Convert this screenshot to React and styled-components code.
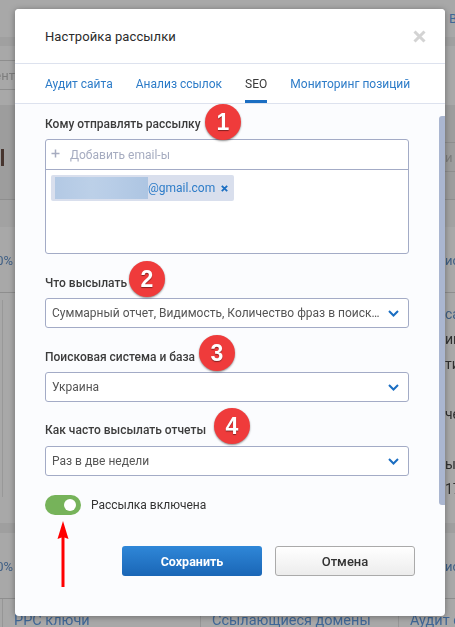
import React from 'react';
import styled, { createGlobalStyle } from 'styled-components';

const Global = createGlobalStyle`
  html, body { margin: 0; padding: 0; background: #a8a8a8; }
  body { font-family: Roboto, "Noto Sans", sans-serif; overflow: hidden; }
  * { box-sizing: border-box; }
`;

const Page = styled.div`
  position: relative;
  width: 455px;
  height: 627px;
  overflow: hidden;
`;

const Backdrop = styled.div`
  display: flex;
  flex-direction: column;
  height: 100%;
  filter: blur(0.4px);
`;

const linePlace = { left: 'left bottom / 15px 1px', right: 'right bottom / 10px 1px', both: 'left bottom / 100% 1px' };

const Band = styled.div`
  display: flex;
  justify-content: space-between;
  align-items: center;
  flex: 0 0 ${p => p.$h}px;
  background: ${p => (p.$line ? `linear-gradient(#8e8e8e, #8e8e8e) ${linePlace[p.$line]} no-repeat, ` : '')}${p => p.$bg || '#a8a8a8'};
  font-size: 13px;
  color: #3f5f85;
`;

const LeftBit = styled.div`
  flex: 0 0 15px;
  min-width: 0;
  display: flex;
  justify-content: flex-end;
  padding-right: ${p => p.$pad || 0}px;
  white-space: nowrap;
  color: ${p => p.$c || '#3f5f85'};
`;

const RightBit = styled.div`
  flex: 0 0 ${p => p.$w || 10}px;
  min-width: 0;
  overflow: hidden;
  white-space: nowrap;
  color: ${p => p.$c || '#3f5f85'};
`;

const Stub = styled.i`
  display: block;
  width: 3px;
  height: 17px;
  margin-left: 1px;
  background: #47352f;
`;

const Section = styled.div`
  flex: 0 0 204px;
  display: flex;
  justify-content: space-between;
  background: #a8a8a8;
  font-size: 14px;
`;

const SideRail = styled.div`
  flex: 0 0 15px;
  margin-left: 2px;
  border-left: 1px solid #989898;
  display: flex;
  flex-direction: column;
  align-items: flex-end;
  margin-top: 7px;
  padding-top: 13px;
  height: 197px;
`;

const Tick = styled.i`
  display: block;
  width: 1px;
  height: ${p => p.$h}px;
  margin-bottom: ${p => p.$gap}px;
  margin-right: 1px;
  background: ${p => p.$c};
`;

const SideLines = styled.div`
  flex: 0 0 10px;
  overflow: hidden;
  padding-top: 9px;
  white-space: nowrap;
`;

const SideLine = styled.div`
  height: 25px;
  line-height: 25px;
  overflow: hidden;
  color: ${p => p.$c || '#2f2f2f'};
`;

const Footer = styled.div`
  display: grid;
  grid-template-columns: 198px 198px 57px;
  flex: 1;
  padding-left: 2px;
  font-size: 14.5px;
  color: #3f6797;
  overflow: hidden;
  white-space: nowrap;
`;

const FooterCell = styled.div`
  padding-left: 11px;
  line-height: 44px;
  height: 33px;
  overflow: hidden;
  border-left: 1px solid #969696;
`;

const Modal = styled.div`
  position: absolute;
  left: 15px;
  top: 9px;
  width: 430px;
  height: 607px;
  display: flex;
  flex-direction: column;
  border-radius: 4px;
  overflow: hidden;
  background: #fbfcfe;
  box-shadow: 0 1px 6px rgba(0, 0, 0, 0.35);
`;

const Head = styled.div`
  flex: 0 0 55px;
  display: flex;
  align-items: center;
  justify-content: space-between;
  padding: 0 19px 0 30px;
  background: #fff;
  border-bottom: 1px solid #dde2ee;
`;

const Title = styled.div`
  font-size: 13px;
  color: #2b2b2b;
  letter-spacing: 0.1px;
`;

const Close = styled.svg`
  display: block;
  width: 13px;
  height: 13px;
  margin-top: 1px;
`;

const Tabs = styled.div`
  flex: 0 0 40px;
  display: flex;
  gap: 23px;
  padding: 0 30px;
  background: #fff;
  border-bottom: 1px solid #dde2ee;
`;

const Tab = styled.div`
  height: 39px;
  padding-top: 12px;
  font-size: 12px;
  line-height: 16px;
  white-space: nowrap;
  color: ${p => (p.$active ? '#3a3a3a' : '#2d7cc8')};
  border-bottom: 3px solid ${p => (p.$active ? '#1b6ec2' : 'transparent')};
`;

const Body = styled.div`
  flex: 1;
  display: flex;
  flex-direction: column;
  padding: 12px 36px 0 30px;
`;

const Label = styled.div`
  height: 16px;
  font-size: 12px;
  font-weight: 500;
  line-height: 16px;
  color: #3c3c3c;
  margin-top: ${p => p.$mt || 0}px;
  margin-bottom: ${p => p.$mb || 7}px;
`;

const EmailBox = styled.div`
  height: 115px;
  background: #fff;
  border: 1px solid #a3abc6;
  border-radius: 3px;
`;

const AddRow = styled.div`
  height: 30px;
  display: flex;
  align-items: center;
  gap: 10px;
  padding-left: 5px;
  border-bottom: 1px solid #a3abc6;
`;

const Plus = styled.svg`
  display: block;
  width: 9px;
  height: 9px;
  margin-bottom: 3px;
`;

const Placeholder = styled.span`
  font-size: 12px;
  color: #a6acc0;
`;

const ChipArea = styled.div`
  padding: 5px;
  display: flex;
`;

const Chip = styled.div`
  display: flex;
  align-items: center;
  height: 26px;
  padding: 0 6px 0 4px;
  background: #d9dfed;
  border-radius: 2px;
  font-size: 12px;
  color: #2d7cc8;
`;

const Redacted = styled.span`
  display: block;
  width: 93px;
  height: 22px;
  background: linear-gradient(90deg, #b3c9e4, #bcd0e8 40%, #b8cde7 60%, #adc5e2);
`;

const ChipClose = styled.svg`
  display: block;
  width: 7px;
  height: 7px;
  margin-left: 6px;
`;

const Select = styled.div`
  height: 30px;
  display: flex;
  align-items: center;
  justify-content: space-between;
  padding: 0 9px 0 6px;
  background: #fff;
  border: 1px solid #a3abc6;
  border-radius: 3px;
  font-size: 12px;
  color: #555;
`;

const SelectText = styled.span`
  flex: 1;
  min-width: 0;
  white-space: nowrap;
  overflow: hidden;
  text-overflow: ellipsis;
  margin-right: 7px;
`;

const Chevron = styled.svg`
  display: block;
  flex: none;
  width: 11px;
  height: 7px;
`;

const ToggleRow = styled.div`
  display: flex;
  align-items: center;
  gap: 10px;
  margin-top: 19px;
  height: 20px;
  font-size: 12px;
  color: #333;
`;

const Toggle = styled.div`
  width: 36px;
  height: 20px;
  display: flex;
  align-items: center;
  justify-content: flex-end;
  padding-right: 5px;
  border-radius: 10px;
  background: #76b35a;
`;

const Knob = styled.span`
  display: block;
  width: 12px;
  height: 12px;
  border-radius: 50%;
  background: #fff;
`;

const Actions = styled.div`
  display: flex;
  gap: 13px;
  margin: 31px -6px 0 77px;
`;

const Button = styled.button`
  flex: 0 0 140px;
  height: 30px;
  padding: 0;
  font-family: inherit;
  font-size: ${p => (p.$primary ? 12.5 : 13)}px;
  font-weight: ${p => (p.$primary ? 700 : 500)};
  color: ${p => (p.$primary ? '#fff' : '#333')};
  background: ${p =>
    p.$primary
      ? 'linear-gradient(180deg, #2f87d8, #1a66b6)'
      : 'linear-gradient(180deg, #fff, #ececec)'};
  border: ${p => (p.$primary ? 'none' : '1px solid #aaa')};
  border-radius: 3px;
`;

const Scrollbar = styled.div`
  position: absolute;
  right: 0;
  top: 107px;
  width: 6px;
  height: 389px;
  background: #aab6d0;
  border-radius: 3px 0 0 3px;
`;

const Badge = styled.div`
  position: absolute;
  left: ${p => p.$x - 15 - 18}px;
  top: ${p => p.$y - 9 - 18}px;
  width: 36px;
  height: 36px;
  display: flex;
  align-items: center;
  justify-content: center;
  border-radius: 50%;
  background: #ef3b3b;
  box-shadow: 0 1px 2px rgba(0, 0, 0, 0.45);
  font-family: "Liberation Sans", Arial, sans-serif;
  font-size: 23px;
  font-weight: 700;
  color: #fff;
  text-shadow: 0 1px 1px rgba(0, 0, 0, 0.45);
`;

const Arrow = styled.svg`
  position: absolute;
  left: 38px;
  top: 512px;
  width: 20px;
  height: 68px;
`;

const Chev = () => (
  <Chevron viewBox="0 0 11 7">
    <polyline points="1,1 5.5,5.5 10,1" fill="none" stroke="#1b6ec2" strokeWidth="2" />
  </Chevron>
);

export default function App() {
  return (
    <Page>
      <Global />
      <Backdrop>
        <Band $h={37}>
          <span />
          <RightBit $c="#3f6797" $w={6}>В</RightBit>
        </Band>
        <Band $h={9} $bg="#a0a0a0" />
        <Band $h={15} $line="left" />
        <Band $h={29} $line="left"><LeftBit $c="#7d7d7d">Контент</LeftBit></Band>
        <Band $h={15} />
        <Band $h={38} $bg="#9d9d9d" $line="right" />
        <Band $h={29} $bg="#9d9d9d" $line="right">
          <Stub />
          <RightBit $c="#7d7d7d">и</RightBit>
        </Band>
        <Band $h={28} $bg="#9d9d9d" $line="both" />
        <Band $h={27} $bg="#a2a2a2" />
        <Band $h={66} $line="both">
          <LeftBit $pad={2}>100%</LeftBit>
          <RightBit>иск</RightBit>
        </Band>
        <Section>
          <SideRail>
            <Tick $h={9} $gap={23} $c="#4d5e9c" />
            <Tick $h={8} $gap={17} $c="#7a4f70" />
            <Tick $h={8} $gap={17} $c="#8e2b55" />
            <Tick $h={8} $gap={0} $c="#6d4a88" />
          </SideRail>
          <SideLines>
            <SideLine $c="#3f5f85">са</SideLine>
            <SideLine>иц</SideLine>
            <SideLine>ти</SideLine>
            <SideLine />
            <SideLine>че</SideLine>
            <SideLine />
            <SideLine>ы:</SideLine>
            <SideLine>17</SideLine>
          </SideLines>
        </Section>
        <Band $h={21} />
        <Band $h={10} $bg="#9f9f9f" />
        <Band $h={66} $line="both">
          <LeftBit $pad={2}>100%</LeftBit>
          <RightBit>иск</RightBit>
        </Band>
        <Footer>
          <FooterCell>РРС ключи</FooterCell>
          <FooterCell>Ссылающиеся домены</FooterCell>
          <FooterCell>Аудит сайта</FooterCell>
        </Footer>
      </Backdrop>

      <Modal>
        <Head>
          <Title>Настройка рассылки</Title>
          <Close viewBox="0 0 13 13">
            <path d="M1.5 1.5L11.5 11.5M11.5 1.5L1.5 11.5" stroke="#d3d3d3" strokeWidth="3" />
          </Close>
        </Head>
        <Tabs>
          <Tab>Аудит сайта</Tab>
          <Tab>Анализ ссылок</Tab>
          <Tab $active>SEO</Tab>
          <Tab>Мониторинг позиций</Tab>
        </Tabs>
        <Body>
          <Label>Кому отправлять рассылку</Label>
          <EmailBox>
            <AddRow>
              <Plus viewBox="0 0 9 9">
                <path d="M4.5 0.5V8.5M0.5 4.5H8.5" stroke="#a6acc0" strokeWidth="1.5" />
              </Plus>
              <Placeholder>Добавить email-ы</Placeholder>
            </AddRow>
            <ChipArea>
              <Chip>
                <Redacted />
                @gmail.com
                <ChipClose viewBox="0 0 7 7">
                  <path d="M0.8 0.8L6.2 6.2M6.2 0.8L0.8 6.2" stroke="#1b6ec2" strokeWidth="1.8" />
                </ChipClose>
              </Chip>
            </ChipArea>
          </EmailBox>
          <Label $mt={21}>Что высылать</Label>
          <Select>
            <SelectText>Суммарный отчет, Видимость, Количество фраз в поиске, Средняя позиция</SelectText>
            <Chev />
          </Select>
          <Label $mt={21}>Поисковая система и база</Label>
          <Select>
            <SelectText>Украина</SelectText>
            <Chev />
          </Select>
          <Label $mt={20} $mb={8}>Как часто высылать отчеты</Label>
          <Select>
            <SelectText>Раз в две недели</SelectText>
            <Chev />
          </Select>
          <ToggleRow>
            <Toggle><Knob /></Toggle>
            Рассылка включена
          </ToggleRow>
          <Actions>
            <Button $primary>Сохранить</Button>
            <Button>Отмена</Button>
          </Actions>
        </Body>
        <Scrollbar />
        <Badge $x={223} $y={122}>1</Badge>
        <Badge $x={147} $y={279}>2</Badge>
        <Badge $x={217} $y={353}>3</Badge>
        <Badge $x={232} $y={426}>4</Badge>
        <Arrow viewBox="0 0 20 68">
          <path d="M10 0L15.5 18L11.5 16.5V66H8.5V16.5L4.5 18Z" fill="#f00" />
        </Arrow>
      </Modal>
    </Page>
  );
}
